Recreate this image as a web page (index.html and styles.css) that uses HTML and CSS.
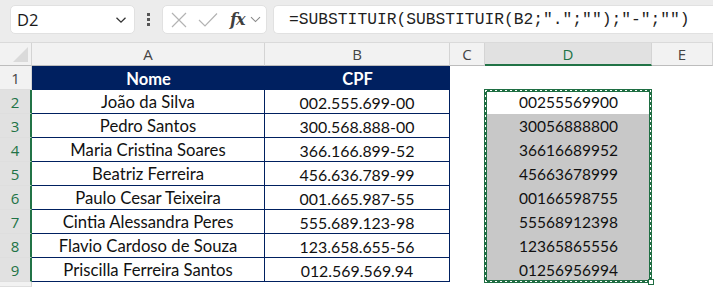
FILE: index.html
```html
<!DOCTYPE html>
<html lang="pt">
<head>
<meta charset="utf-8">
<title>Planilha</title>
<link rel="stylesheet" href="styles.css">
</head>
<body>
<div class="toolbar">
  <div class="namebox"><span class="nb-text">D2</span>
    <svg class="nb-chev" width="12" height="8" viewBox="0 0 12 8"><path d="M1.5 1.8 L6 6.2 L10.5 1.8" fill="none" stroke="#333" stroke-width="1.3"/></svg>
  </div>
  <div class="dots"><i></i><i></i><i></i></div>
  <div class="fxbox">
    <svg class="ic-x" width="16" height="16" viewBox="0 0 16 16"><path d="M1 1 L15 15 M15 1 L1 15" stroke="#b3b3b3" stroke-width="1.2" fill="none"/></svg>
    <svg class="ic-check" width="20" height="16" viewBox="0 0 20 16"><path d="M1 8 L7 14 L19 1.5" stroke="#b3b3b3" stroke-width="1.2" fill="none"/></svg>
    <span class="fx">fx</span>
    <svg class="fx-chev" width="11" height="7" viewBox="0 0 11 7"><path d="M1 1.2 L5.5 5.6 L10 1.2" fill="none" stroke="#8a8a8a" stroke-width="1.1"/></svg>
  </div>
  <div class="formula">=SUBSTITUIR(SUBSTITUIR(B2;".";"");"-";"")</div>
</div>

<div class="sheet">
  <div class="corner"><span class="tri"></span></div>
  <div class="colh">A</div>
  <div class="colh">B</div>
  <div class="colh">C</div>
  <div class="colh colsel">D</div>
  <div class="colh">E</div>

  <div class="rowh">1</div>
  <div class="c hdr">Nome</div>
  <div class="c hdr">CPF</div>
  <div class="c"></div><div class="c"></div><div class="c"></div>

  <div class="rowh rsel">2</div>
  <div class="c t tA">João da Silva</div>
  <div class="c t tB">002.555.699-00</div>
  <div class="c"></div><div class="c d active">00255569900</div><div class="c"></div>

  <div class="rowh rsel">3</div>
  <div class="c t tA">Pedro Santos</div>
  <div class="c t tB">300.568.888-00</div>
  <div class="c"></div><div class="c d sel">30056888800</div><div class="c"></div>

  <div class="rowh rsel">4</div>
  <div class="c t tA">Maria Cristina Soares</div>
  <div class="c t tB">366.166.899-52</div>
  <div class="c"></div><div class="c d sel">36616689952</div><div class="c"></div>

  <div class="rowh rsel">5</div>
  <div class="c t tA">Beatriz Ferreira</div>
  <div class="c t tB">456.636.789-99</div>
  <div class="c"></div><div class="c d sel">45663678999</div><div class="c"></div>

  <div class="rowh rsel">6</div>
  <div class="c t tA">Paulo Cesar Teixeira</div>
  <div class="c t tB">001.665.987-55</div>
  <div class="c"></div><div class="c d sel">00166598755</div><div class="c"></div>

  <div class="rowh rsel">7</div>
  <div class="c t tA">Cintia Alessandra Peres</div>
  <div class="c t tB">555.689.123-98</div>
  <div class="c"></div><div class="c d sel">55568912398</div><div class="c"></div>

  <div class="rowh rsel">8</div>
  <div class="c t tA">Flavio Cardoso de Souza</div>
  <div class="c t tB">123.658.655-56</div>
  <div class="c"></div><div class="c d sel">12365865556</div><div class="c"></div>

  <div class="rowh rsel">9</div>
  <div class="c t tA">Priscilla Ferreira Santos</div>
  <div class="c t tB">012.569.569.94</div>
  <div class="c"></div><div class="c d sel">01256956994</div><div class="c"></div>

  <div class="rowh"></div>
  <div class="c"></div><div class="c"></div><div class="c"></div><div class="c"></div><div class="c"></div>

  <div class="marquee"><span class="ants"></span><span class="handle"></span></div>
</div>
</body>
</html>
```

FILE: styles.css
```css
* { box-sizing: border-box; }
html, body {
  margin: 0;
  padding: 0;
  width: 713px;
  height: 287px;
  overflow: hidden;
  background: #ffffff;
}
body { font-family: Lato, "Noto Sans", sans-serif; }

.toolbar {
  height: 43px;
  background: #ececec;
  border-bottom: 1px solid #dadada;
  display: flex;
  align-items: flex-start;
  padding: 5px 0 0 10px;
}
.namebox {
  width: 125px;
  height: 29px;
  background: #fff;
  border: 1px solid #e1e1e1;
  border-radius: 5px;
  display: flex;
  align-items: center;
  justify-content: space-between;
  padding: 0 7px 0 6px;
}
.nb-text {
  font-family: "Open Sans", "Noto Sans", sans-serif;
  font-size: 16.5px;
  color: #1a1a1a;
}
.dots {
  width: 27px;
  height: 29px;
  display: flex;
  flex-direction: column;
  align-items: center;
  justify-content: center;
  gap: 2px;
}
.dots i {
  display: block;
  width: 3px;
  height: 3px;
  background: #555;
}
.fxbox {
  width: 105px;
  height: 29px;
  background: #fff;
  border: 1px solid #e1e1e1;
  border-radius: 5px;
  display: flex;
  align-items: center;
  padding-left: 8px;
}
.ic-x { margin-right: 11px; }
.ic-check { margin-right: 12px; }
.fx {
  font-family: "DejaVu Serif", "Liberation Serif", serif;
  font-style: italic;
  font-weight: bold;
  font-size: 16px;
  color: #404040;
  letter-spacing: -1px;
  margin-right: 6px;
}
.formula {
  margin-left: 6px;
  flex: 1;
  height: 29px;
  background: #fff;
  border: 1px solid #e1e1e1;
  border-right: none;
  border-radius: 5px 0 0 5px;
  font-family: "Liberation Mono", "DejaVu Sans Mono", monospace;
  font-size: 16.3px;
  line-height: 27px;
  padding-left: 15px;
  color: #1f1f1f;
  white-space: nowrap;
  overflow: hidden;
}

.sheet {
  position: relative;
  display: grid;
  grid-template-columns: 32px 233px 185px 35px 167px 61px;
  grid-template-rows: 23px repeat(9, 24px) 5px;
}
.corner {
  background: #f2f2f2;
  border-right: 1px solid #d4d4d4;
  border-bottom: 1px solid #bdbdbd;
  position: relative;
}
.tri {
  position: absolute;
  right: 3px;
  bottom: 3px;
  width: 0;
  height: 0;
  border-left: 15px solid transparent;
  border-bottom: 15px solid #dadada;
}
.colh {
  background: #f2f2f2;
  border-right: 1px solid #d4d4d4;
  border-bottom: 1px solid #bdbdbd;
  font-family: "Open Sans", "Noto Sans", sans-serif;
  font-size: 15px;
  color: #444;
  text-align: center;
  line-height: 22px;
}
.colsel {
  background: #e1e1e1;
  color: #217346;
  border-bottom: 2px solid #217346;
}
.rowh {
  background: #f2f2f2;
  border-right: 1px solid #d4d4d4;
  border-bottom: 1px solid #dedede;
  font-family: "Open Sans", "Noto Sans", sans-serif;
  font-size: 15px;
  color: #444;
  text-align: center;
  line-height: 24px;
}
.rsel {
  background: #e1e1e1;
  color: #217346;
  border-right: 2px solid #217346;
}
.c {
  font-size: 15.5px;
  color: #111;
  text-align: center;
  line-height: 26px;
  white-space: nowrap;
}
.hdr {
  background: #002060;
  color: #fff;
  font-weight: bold;
  font-size: 16.5px;
}
.t {
  border-right: 1px solid #002060;
  border-bottom: 1px solid #002060;
  line-height: 25px;
}
.tA { font-size: 16.7px; }
.tB { font-size: 15.9px; }
.d { line-height: 25px; }
.active { background: #fff; }
.sel { background: #c8c8c8; }

.marquee {
  position: absolute;
  left: 484px;
  top: 46px;
  width: 168px;
  height: 194px;
  border: 3px solid #1f6e43;
}
.ants {
  position: absolute;
  inset: -2px;
  background:
    repeating-linear-gradient(90deg, #fff 0 2px, transparent 2px 5px) top left / 100% 1px no-repeat,
    repeating-linear-gradient(90deg, #fff 0 2px, transparent 2px 5px) bottom left / 100% 1px no-repeat,
    repeating-linear-gradient(180deg, #fff 0 2px, transparent 2px 5px) top left / 1px 100% no-repeat,
    repeating-linear-gradient(180deg, #fff 0 2px, transparent 2px 5px) top right / 1px 100% no-repeat;
}
.handle {
  position: absolute;
  right: -5px;
  bottom: -5px;
  width: 6px;
  height: 6px;
  background: #fff;
  border: 1px solid #1f6e43;
}
```
